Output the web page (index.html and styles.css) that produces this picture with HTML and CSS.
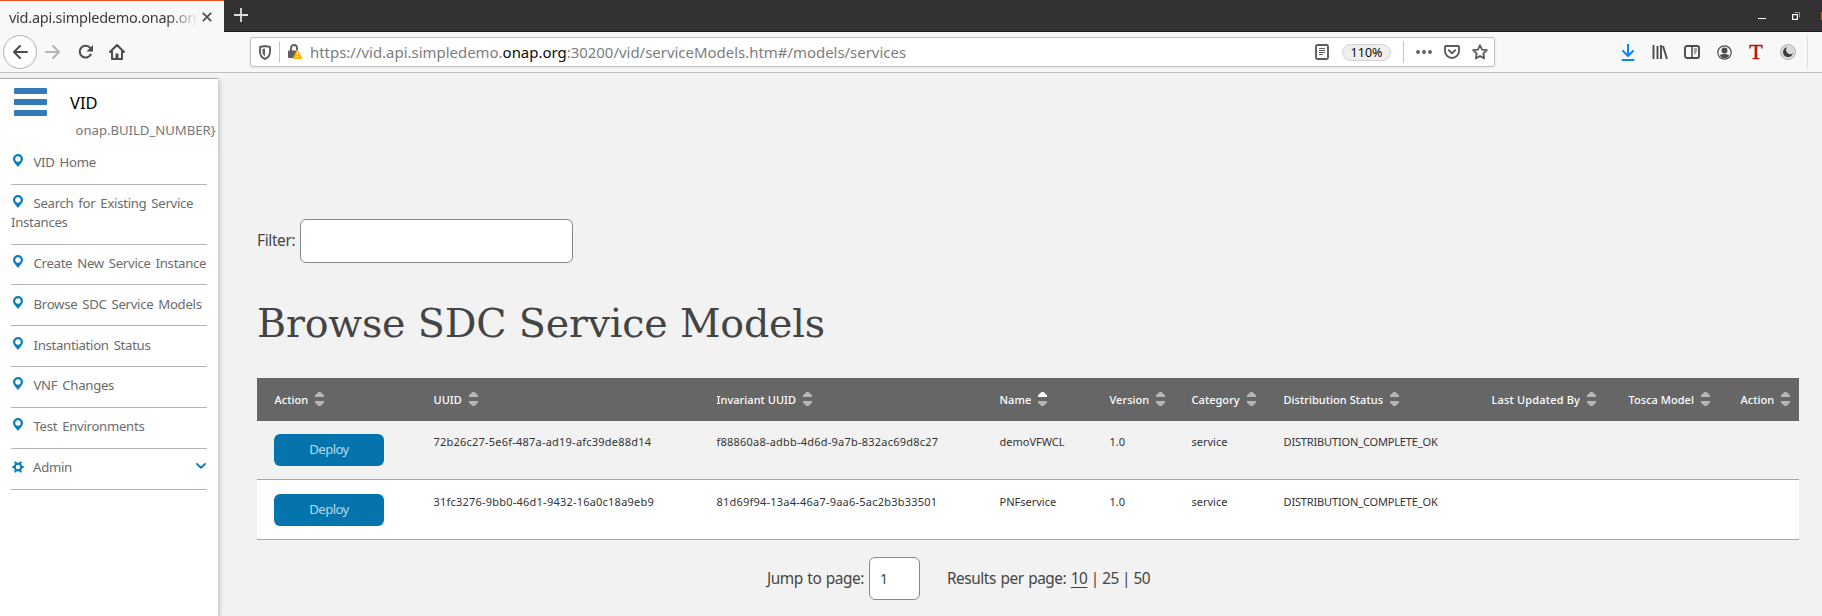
FILE: index.html
```html
<!DOCTYPE html>
<html lang="en">
<head>
<meta charset="utf-8">
<title>VID</title>
<link rel="stylesheet" href="styles.css">
</head>
<body>
<svg class="defs" width="0" height="0" aria-hidden="true">
  <symbol id="pin" viewBox="0 0 10 13"><path fill-rule="evenodd" d="M5 0a5 5 0 0 1 5 5c0 3-3 5-5 8-2-3-5-5-5-8a5 5 0 0 1 5-5zM5 2.300a2.700 2.700 0 1 0 0 5.400a2.700 2.700 0 0 0 0-5.400z" fill="#0a7fba"/></symbol>
  <symbol id="up" viewBox="0 0 9 5"><path d="M3.500 0h2L9 3.300V5H0V3.300z"/></symbol>
  <symbol id="down" viewBox="0 0 9 5"><path d="M3.500 5h2L9 1.700V0H0v1.700z"/></symbol>
</svg>

<div class="tabbar">
  <div class="tab">
    <span class="tab-title">vid.api.simpledemo.onap.org</span>
    <svg class="tab-close" width="10" height="10" viewBox="0 0 10 10"><path d="M.8.800l8.400 8.400M9.200.800L.8 9.200" stroke="#4a4a4c" stroke-width="1.700"/></svg>
  </div>
  <svg class="plus" width="14" height="14" viewBox="0 0 14 14"><path d="M7 0v14M0 7h14" stroke="#dedede" stroke-width="1.800"/></svg>
  <div class="window-buttons">
    <svg class="minimize" width="8" height="2" viewBox="0 0 8 2"><path d="M0 .5h8" stroke="#fff"/></svg>
    <svg class="restore" width="8" height="8" viewBox="0 0 8 8" fill="none"><path d="M2.500.500h5v5" stroke="#999"/><rect x=".6" y="2.600" width="4.800" height="4.800" stroke="#fff" stroke-width="1.200"/></svg>
    <span class="close-edge"></span>
  </div>
</div>

<div class="navbar">
  <div class="nav-left">
    <span class="back"><svg width="16" height="14" viewBox="0 0 16 14"><path d="M8 1L2 7l6 6M2 7h13" fill="none" stroke="#4c4c4e" stroke-width="2" stroke-linecap="round" stroke-linejoin="round"/></svg></span>
    <svg class="forward" width="16" height="14" viewBox="0 0 16 14"><path d="M8 1l6 6-6 6M14 7H1" fill="none" stroke="#b5b5b6" stroke-width="2" stroke-linecap="round" stroke-linejoin="round"/></svg>
    <svg class="reload" width="16" height="16" viewBox="0 0 16 16"><path d="M12.300 4A5.900 5.900 0 1 0 12.800 10.500" fill="none" stroke="#4c4c4e" stroke-width="2" stroke-linecap="round"/><path d="M15 1v6.500H8.500z" fill="#4c4c4e"/></svg>
    <svg class="home" width="16" height="16" viewBox="0 0 16 16"><path d="M1 8l7-7 7 7M3 7.500V15h10V7.500" fill="none" stroke="#4c4c4e" stroke-width="2" stroke-linejoin="round" stroke-linecap="round"/><path d="M6.500 14V9.500h3V14z" fill="#4c4c4e"/></svg>
  </div>
  <div class="urlbar">
    <svg class="shield" width="12" height="15" viewBox="0 0 12 15"><path d="M6 1L11 2v4.500C11 10.500 8.500 13 6 14 3.500 13 1 10.500 1 6.500V2z" fill="none" stroke="#5d5d5f" stroke-width="1.900" stroke-linejoin="round"/><path d="M6 3.600v7.800C4.500 10.500 3.500 9 3.500 6.500V4z" fill="#5d5d5f"/></svg>
    <span class="url-sep"></span>
    <svg class="lock" width="16" height="16" viewBox="0 0 16 16"><path d="M3 7V4a3 3 0 0 1 6 0v2" fill="none" stroke="#5d5d5f" stroke-width="1.900"/><rect x="0" y="6.500" width="9.500" height="7.500" rx="1" fill="#5d5d5f"/><path d="M9.500 6L14 14.500H5z" fill="#ffb000" stroke="#ffb000" stroke-linejoin="round"/><path d="M9.500 8v3M9.500 12.300v1.300" stroke="#fff" stroke-width="1.300"/></svg>
    <span class="url">https://vid.api.simpledemo.<b>onap.org</b>:30200/vid/serviceModels.htm#/models/services</span>
    <svg class="reader" width="14" height="16" viewBox="0 0 14 16"><rect x="1" y="1" width="12" height="14" rx="1.500" fill="none" stroke="#5d5d5f" stroke-width="1.900"/><path d="M4 4.500h6M4 6.500h6M4 8.500h6M4 10.500h4" stroke="#5d5d5f"/></svg>
    <span class="zoom">110%</span>
    <span class="url-sep sep-right"></span>
    <svg class="dots" width="16" height="4" viewBox="0 0 16 4" fill="#5d5d5f"><circle cx="2" cy="2" r="1.900"/><circle cx="8" cy="2" r="1.900"/><circle cx="14" cy="2" r="1.900"/></svg>
    <svg class="pocket" width="16" height="14" viewBox="0 0 16 14" fill="none" stroke="#5d5d5f" stroke-width="1.900" stroke-linecap="round" stroke-linejoin="round"><path d="M2 1h12a1 1 0 0 1 1 1v4A7 7 0 0 1 1 6V2a1 1 0 0 1 1-1z"/><path d="M4.800 5.200L8 8.200l3.200-3"/></svg>
    <svg class="star" width="16" height="16" viewBox="0 0 16 16"><path d="M8 1.200l2 4.400 4.900.6-3.600 3.300.9 4.900L8 12l-4.200 2.400.9-4.900L1.100 6.200 6 5.600z" fill="none" stroke="#5d5d5f" stroke-width="1.800" stroke-linejoin="round"/></svg>
  </div>
  <div class="nav-right">
    <span><svg width="14" height="17" viewBox="0 0 14 17"><path d="M7 .5v11M2 7l5 5 5-5M1.500 16h11" fill="none" stroke="#0a84ff" stroke-width="2" stroke-linecap="round" stroke-linejoin="round"/></svg></span>
    <span><svg width="16" height="14" viewBox="0 0 16 14"><path d="M1.500 0v14M5.500 1v13M9 0v14M11 1l4 13" fill="none" stroke="#4c4c4e" stroke-width="1.900"/></svg></span>
    <span><svg width="16" height="14" viewBox="0 0 16 14"><rect x="1" y="1" width="14" height="12" rx="2" fill="none" stroke="#4c4c4e" stroke-width="1.900"/><path d="M8 1v12" stroke="#4c4c4e" stroke-width="1.600"/><path d="M10 4h3M10 6h3M10 8h2" stroke="#4c4c4e"/></svg></span>
    <span><svg width="15" height="15" viewBox="0 0 15 15"><circle cx="7.500" cy="7.500" r="6.700" fill="none" stroke="#4c4c4e" stroke-width="1.200"/><circle cx="7.500" cy="5.600" r="3" fill="#4c4c4e"/><path d="M2.800 10.500c2-2 7.400-2 9.400 0a5.600 5.600 0 0 1-9.400 0z" fill="#4c4c4e"/></svg></span>
    <span class="t-icon">T</span>
    <span><svg width="16" height="16" viewBox="0 0 16 16"><circle cx="8" cy="8" r="7.500" fill="#dadada" stroke="#b4b4b4"/><path d="M7.500 3.200A4.900 4.900 0 1 0 12.800 9 3.700 3.700 0 0 1 7.500 3.200z" fill="#3c3c3e"/></svg></span>
  </div>
</div>

<div class="page">
  <aside class="sidebar">
    <div class="brand">
      <span class="burger"><i></i><i></i><i></i></span>
      <span class="brand-name">VID</span>
    </div>
    <div class="build">onap.BUILD_NUMBER}</div>
    <ul class="menu">
      <li><svg class="pin"><use href="#pin"/></svg>VID Home</li>
      <li><svg class="pin"><use href="#pin"/></svg>Search for Existing Service<br>Instances</li>
      <li class="short"><svg class="pin"><use href="#pin"/></svg>Create New Service Instance</li>
      <li class="low"><svg class="pin"><use href="#pin"/></svg>Browse SDC Service Models</li>
      <li class="low"><svg class="pin"><use href="#pin"/></svg>Instantiation Status</li>
      <li><svg class="pin"><use href="#pin"/></svg>VNF Changes</li>
      <li><svg class="pin"><use href="#pin"/></svg>Test Environments</li>
      <li class="admin"><svg class="gear" width="12" height="12" viewBox="0 0 12 12"><circle cx="6" cy="6" r="3.300" fill="none" stroke="#0a7fba" stroke-width="2.200"/><path d="M.3 6h2M9.700 6h2M2.900.800l1.200 2M9.100.800l-1.200 2M2.900 11.200l1.200-2M9.100 11.200l-1.200-2" stroke="#0a7fba" stroke-width="2.200"/></svg>Admin<svg class="chevron" width="10" height="6" viewBox="0 0 10 6"><path d="M1 1l4 3.600L9 1" fill="none" stroke="#0a7fba" stroke-width="1.900" stroke-linecap="round"/></svg></li>
    </ul>
  </aside>
  <main class="content">
    <div class="filter"><label for="filter">Filter:</label><input id="filter" class="box" type="text"></div>
    <h1>Browse SDC Service Models</h1>
    <table>
      <colgroup><col class="c1"><col class="c2"><col class="c3"><col class="c4"><col class="c5"><col class="c6"><col class="c7"><col class="c8"><col class="c9"><col class="c10"></colgroup>
      <thead>
        <tr>
          <th>Action<span class="sort"><svg><use href="#up"/></svg><svg><use href="#down"/></svg></span></th>
          <th>UUID<span class="sort"><svg><use href="#up"/></svg><svg><use href="#down"/></svg></span></th>
          <th>Invariant UUID<span class="sort"><svg><use href="#up"/></svg><svg><use href="#down"/></svg></span></th>
          <th>Name<span class="sort asc"><svg><use href="#up"/></svg><svg><use href="#down"/></svg></span></th>
          <th>Version<span class="sort"><svg><use href="#up"/></svg><svg><use href="#down"/></svg></span></th>
          <th>Category<span class="sort"><svg><use href="#up"/></svg><svg><use href="#down"/></svg></span></th>
          <th>Distribution Status<span class="sort"><svg><use href="#up"/></svg><svg><use href="#down"/></svg></span></th>
          <th class="wide">Last Updated By<span class="sort"><svg><use href="#up"/></svg><svg><use href="#down"/></svg></span></th>
          <th>Tosca Model<span class="sort"><svg><use href="#up"/></svg><svg><use href="#down"/></svg></span></th>
          <th>Action<span class="sort"><svg><use href="#up"/></svg><svg><use href="#down"/></svg></span></th>
        </tr>
      </thead>
      <tbody>
        <tr><td><button class="deploy">Deploy</button></td><td class="id">72b26c27-5e6f-487a-ad19-afc39de88d14</td><td class="id">f88860a8-adbb-4d6d-9a7b-832ac69d8c27</td><td>demoVFWCL</td><td>1.0</td><td>service</td><td class="status">DISTRIBUTION_COMPLETE_OK</td><td></td><td></td><td></td></tr>
        <tr><td><button class="deploy">Deploy</button></td><td class="id">31fc3276-9bb0-46d1-9432-16a0c18a9eb9</td><td class="id">81d69f94-13a4-46a7-9aa6-5ac2b3b33501</td><td>PNFservice</td><td>1.0</td><td>service</td><td class="status">DISTRIBUTION_COMPLETE_OK</td><td></td><td></td><td></td></tr>
      </tbody>
    </table>
    <div class="pager">
      <label for="page">Jump to page:</label><input id="page" class="box" type="text" value="1">
      <span class="results">Results per page: <span class="sizes"><u>10</u> | 25 | 50</span></span>
    </div>
  </main>
</div>
</body>
</html>
```
FILE: styles.css
```css
* { box-sizing: border-box; }
body {
  margin: 0;
  width: 1822px;
  height: 616px;
  overflow: hidden;
  background: #f2f2f2;
  font-family: "Noto Sans", "Open Sans", sans-serif;
  color: #444;
}
svg { display: block; flex: none; }
.defs { position: absolute; }

.tabbar {
  display: flex;
  align-items: center;
  height: 32px;
  background: #333132;
  border-bottom: 1px solid #1c1b1c;
}
.tab {
  display: flex;
  align-items: center;
  width: 224px;
  height: 32px;
  margin-bottom: -1px;
  padding-left: 9px;
  background: #f8f8f8;
  border-top: 1px solid #e95420;
}
.tab-title {
  width: 187px;
  overflow: hidden;
  white-space: nowrap;
  font-size: 14.500px;
  line-height: 22px;
  letter-spacing: -0.250px;
  color: #3c3c3e;
  -webkit-mask-image: linear-gradient(to right, #000 158px, transparent 190px);
  mask-image: linear-gradient(to right, #000 158px, transparent 190px);
}
.tab-close { margin-left: 6px; }
.plus { margin: -1px 0 0 10px; }
.window-buttons { display: flex; align-items: center; margin-left: auto; height: 31px; }
.window-buttons .minimize { margin-top: 6px; }
.window-buttons .restore { margin-left: 26px; }
.close-edge { width: 1px; height: 8px; margin-left: 21px; background: #c4512a; }

.navbar {
  display: flex;
  align-items: center;
  height: 41px;
  background: #f8f8f8;
  border-bottom: 1px solid #bfbfbf;
}
.nav-left { display: flex; align-items: center; width: 250px; padding-left: 3px; }
.back {
  display: flex;
  align-items: center;
  justify-content: center;
  width: 34px;
  height: 34px;
  border: 1px solid #b3b3b3;
  border-radius: 50%;
  background: #fdfdfd;
}
.forward { margin-left: 8px; }
.reload { margin-left: 17px; }
.home { margin-left: 15px; }
.urlbar {
  display: flex;
  align-items: center;
  width: 1245px;
  height: 30px;
  padding-left: 8px;
  background: #fff;
  border: 1px solid #c1c1c1;
  border-radius: 3px;
  box-shadow: 0 1px 3px rgba(0, 0, 0, 0.080);
}
.url-sep { width: 1px; height: 22px; margin-left: 8px; background: #c4c4c4; }
.lock { margin-left: 8px; }
.url { margin-left: 6px; font-size: 14.950px; line-height: 22px; color: #7d7d7e; white-space: nowrap; }
.url b { font-weight: 400; color: #0c0c0d; }
.reader { margin-left: auto; }
.zoom {
  width: 49px;
  height: 17px;
  margin-left: 13px;
  border: 1px solid #d5d5d5;
  border-radius: 9px;
  background: #efefef;
  font-size: 12.500px;
  line-height: 15px;
  text-align: center;
  color: #0c0c0d;
}
.sep-right { margin-left: 12px; }
.dots { margin-left: 12px; }
.pocket { margin-left: 12px; }
.star { margin: 0 6px 0 12px; }
.nav-right {
  display: flex;
  align-items: center;
  width: 196px;
  height: 34px;
  margin-left: auto;
  margin-right: 14px;
  border-right: 1px solid #dedede;
}
.nav-right span { display: flex; justify-content: center; width: 32px; }
.nav-right .t-icon { font: 400 22px/20px "Liberation Serif", serif; color: #b8120c; -webkit-text-stroke: 0.500px #b8120c; }

.page { display: flex; height: 543px; }
.sidebar {
  width: 218px;
  margin-top: 5px;
  background: #fff;
  border-top: 1px solid #b0b0b0;
  box-shadow: 2px 2px 4px rgba(0, 0, 0, 0.180);
}
.brand { display: flex; align-items: flex-start; padding: 8px 0 0 14px; height: 46px; }
.burger { display: flex; flex-direction: column; gap: 5px; width: 33px; padding-top: 0.500px; }
.burger i { height: 6px; border-radius: 1px; background: #337ab7; }
.brand-name { margin: 4px 0 0 23px; font-size: 16.500px; line-height: 24px; color: #000; }
.build { padding-left: 75.500px; font-size: 13.200px; line-height: 18px; letter-spacing: -0.050px; margin-top: -4px; color: #777; white-space: nowrap; }
.menu { list-style: none; margin: 0; padding: 5px 11px 0; }
.menu li {
  height: 41px;
  padding-top: 9px;
  border-bottom: 1px solid #b3b3b3;
  font-size: 13.200px;
  line-height: 19px;
  letter-spacing: -0.300px;
  word-spacing: 1.800px;
  color: #6b6b6b;
  white-space: nowrap;
}
.menu li:nth-child(2) { height: 60px; }
.menu .short { height: 40px; }
.menu .low { padding-top: 10px; }
.pin { display: inline-block; width: 10px; height: 13px; margin: 0 10.500px 0 2px; vertical-align: 0; }
.gear { display: inline-block; margin: 0 9px 0 1px; vertical-align: -1px; }
.chevron { float: right; margin: 5px 1px 0 0; }

.content { width: 1604px; padding: 146px 23px 0 39px; }
.box { border: 1px solid #888; border-radius: 6px; background: #fff; font: 14px "Noto Sans", sans-serif; color: #444; outline: 0; }
.filter { display: flex; align-items: center; height: 44px; font-size: 15.400px; }
.filter .box { width: 273px; height: 44px; margin-left: 4px; }
.filter label { width: 39px; white-space: nowrap; margin-top: -2px; letter-spacing: -0.350px; }
h1 { margin: 32px 0 0; font: 400 39.600px/56px "DejaVu Serif", serif; letter-spacing: -0.180px; color: #444; white-space: nowrap; }
table { width: 1542px; margin-top: 27px; table-layout: fixed; border-collapse: separate; border-spacing: 0; font-size: 11px; }
.c1 { width: 159px; } .c2 { width: 283px; } .c3 { width: 283px; } .c4 { width: 110px; } .c5 { width: 82px; }
.c6 { width: 92px; } .c7 { width: 208px; } .c8 { width: 137px; } .c9 { width: 112px; } .c10 { width: 76px; }
th {
  height: 43px;
  padding: 0 0 0 17.500px;
  background: #666;
  color: #fff;
  font-weight: 500;
  letter-spacing: 0.050px;
  text-align: left;
  white-space: nowrap;
}
th.wide { letter-spacing: 0.180px; }
.sort { display: inline-flex; flex-direction: column; gap: 4px; margin: -2px 0 0 7px; vertical-align: middle; fill: #b5b5b5; position: relative; top: -1px; }
.sort svg { width: 9px; height: 5px; }
.sort.asc svg:first-child { fill: #fff; }
td { height: 60px; padding: 13px 0 0 17.500px; border-bottom: 1px solid #a3a5a4; vertical-align: top; line-height: 16px; color: #333; white-space: nowrap; }
.id { letter-spacing: 0.220px; }
.status { letter-spacing: -0.150px; }
tbody tr:first-child td { height: 59px; }
tbody tr:nth-child(2) td { background: #fff; padding-top: 14px; }
tbody td:first-child { padding-left: 17px; }
.deploy { display: block; width: 110px; height: 32px; padding: 0 0 2px; border: 0; border-radius: 6px; background: #0574ac; color: #b4d9ea; font: 13.200px "Noto Sans", sans-serif; letter-spacing: -0.600px; }
.pager { display: flex; align-items: center; margin-top: 17px; padding-left: 510px; font-size: 15.400px; letter-spacing: -0.450px; word-spacing: 1px; white-space: nowrap; }
.pager label { width: 97px; }
.pager .box { width: 51px; height: 43px; margin-left: 5px; padding: 0 10px; }
.results { margin-left: 27px; }
.sizes { letter-spacing: -0.550px; word-spacing: 0; }
.results u { text-underline-offset: 3px; }
```
